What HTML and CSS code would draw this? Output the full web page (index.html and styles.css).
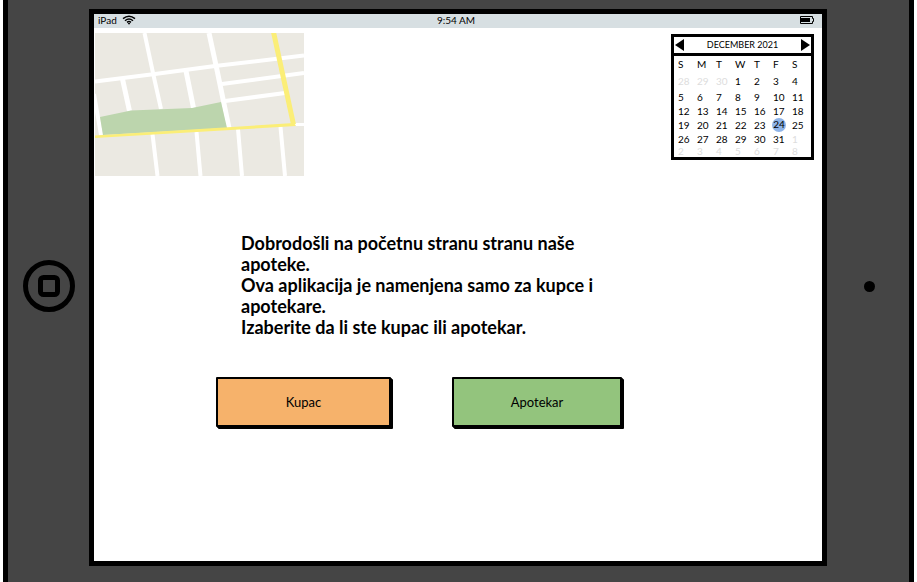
FILE: index.html
```html
<!DOCTYPE html>
<html lang="sr">
<head>
<meta charset="utf-8">
<title>Apoteka</title>
<link rel="stylesheet" href="styles.css">
</head>
<body>
<div class="tablet">
  <div class="bezel">
    <svg class="home" width="52" height="52" viewBox="0 0 52 52" aria-hidden="true">
      <circle cx="26" cy="26" r="23.500"/>
      <rect x="17.500" y="17.500" width="17" height="17" rx="3"/>
    </svg>
  </div>
  <div class="screen">
    <header class="status">
      <div class="carrier">
        <span>iPad</span>
        <svg width="14" height="10" viewBox="0 0 14 10" aria-hidden="true">
          <path class="wave" d="M1 3.700Q7-1.300 13 3.700M3 5.700Q7 2.300 11 5.700M5 7.400Q7 5.800 9 7.400"/>
          <path d="M5.700 8.300Q7 7.300 8.300 8.300L7 9.800z"/>
        </svg>
      </div>
      <span>9:54 AM</span>
      <svg class="battery" width="14" height="8" viewBox="0 0 14 8" aria-hidden="true">
        <path class="case" d="M.5.5H12.500V2.500H13.500V5.500H12.500V7.500H.5z"/>
        <rect x="1" y="2" width="9" height="4"/>
      </svg>
    </header>
    <div class="widgets">
      <svg class="map" width="209" height="143" viewBox="0 0 209 143" role="img" aria-label="Mapa">
        <rect width="209" height="143" fill="#ebe9e2"/>
        <g fill="none" stroke="#fff" stroke-width="4">
          <path d="M0 48.500L60 41L120 33L209 22.500"/>
          <path d="M49.500 0L58 40L66 76"/>
          <path stroke-width="5" d="M114 0L122 37L134 95"/>
          <path stroke-width="5" d="M27.500 46L34.500 78M91 38L98.500 75"/>
          <path d="M127 51L209 40M130 68L190 60"/>
          <path d="M-1 61L6 102"/>
          <path d="M57.500 101L62.500 143M101.500 99L105.500 143M143 96L147 143M185.500 94L190 143"/>
          <path stroke-width="3" d="M198 91.500H209"/>
        </g>
        <path fill="#bcd5ad" d="M5 84L36 77.500L97 75L126 69L132 95L8 102z"/>
        <path fill="none" stroke="#fbee77" stroke-width="5" d="M178.500-1L198.500 91.500"/>
        <path fill="#fbee77" d="M0 102.500L199 90L201 93L0 105z"/>
      </svg>
      <section class="calendar">
        <div class="month">
          <button type="button" aria-label="Prethodni mesec"><svg width="9" height="12" viewBox="0 0 9 12"><path d="M9 0V12L0 6z"/></svg></button>
          <span>DECEMBER 2021</span>
          <button type="button" aria-label="Naredni mesec"><svg width="9" height="12" viewBox="0 0 9 12"><path d="M0 0V12L9 6z"/></svg></button>
        </div>
        <table>
          <thead><tr><th>S</th><th>M</th><th>T</th><th>W</th><th>T</th><th>F</th><th>S</th></tr></thead>
          <tbody>
            <tr><td class="other">28</td><td class="other">29</td><td class="other">30</td><td>1</td><td>2</td><td>3</td><td>4</td></tr>
            <tr><td>5</td><td>6</td><td>7</td><td>8</td><td>9</td><td>10</td><td>11</td></tr>
            <tr><td>12</td><td>13</td><td>14</td><td>15</td><td>16</td><td>17</td><td>18</td></tr>
            <tr><td>19</td><td>20</td><td>21</td><td>22</td><td>23</td><td><span class="today">24</span></td><td>25</td></tr>
            <tr><td>26</td><td>27</td><td>28</td><td>29</td><td>30</td><td>31</td><td class="other">1</td></tr>
            <tr class="last"><td class="other">2</td><td class="other">3</td><td class="other">4</td><td class="other">5</td><td class="other">6</td><td class="other">7</td><td class="other">8</td></tr>
          </tbody>
        </table>
      </section>
    </div>
    <main>
      <p class="welcome">Dobrodošli na početnu stranu stranu naše apoteke.<br>Ova aplikacija je namenjena samo za kupce i apotekare.<br>Izaberite da li ste kupac ili apotekar.</p>
      <div class="choices">
        <button type="button" class="choice buyer">Kupac</button>
        <button type="button" class="choice pharmacist">Apotekar</button>
      </div>
    </main>
  </div>
  <div class="bezel"><span class="camera"></span></div>
</div>
</body>
</html>
```
FILE: styles.css
```css
* { box-sizing: border-box; }
body {
  margin: 0;
  background: #fff;
  color: #000;
  font-family: Lato, "Liberation Sans", sans-serif;
}
button { font: inherit; color: inherit; cursor: pointer; }
svg { display: block; }
.tablet {
  display: grid;
  grid-template-columns: 81px 1fr 82px;
  min-height: 100vh;
  margin: 0 3px;
  padding: 9px 0 16px;
  border: solid #000;
  border-width: 0 5px;
  background: #454545;
}
.bezel {
  display: flex;
  align-items: center;
  justify-content: center;
  padding-bottom: 3px;
}
.home { fill: none; stroke: #000; stroke-width: 5; }
.camera {
  width: 11px;
  height: 11px;
  margin-left: 3px;
  border-radius: 50%;
  background: #000;
}
.screen { border: 5px solid #000; background: #fff; }
.status {
  display: grid;
  grid-template-columns: 1fr auto 1fr;
  align-items: center;
  height: 14px;
  padding: 0 8px 2px 4px;
  background: #d7dfe2;
  font-size: 10px;
  line-height: 12px;
}
.carrier { display: flex; align-items: center; gap: 5px; }
.wave { fill: none; stroke: #000; stroke-width: 1.5; }
.battery { justify-self: end; }
.case { fill: none; stroke: #000; }
.widgets {
  display: flex;
  align-items: flex-start;
  justify-content: space-between;
  padding: 5px 8px 0 1px;
}
.calendar {
  width: 143px;
  margin-top: 1px;
  border: 3px solid #000;
  font-size: 10px;
}
.month {
  display: flex;
  align-items: center;
  justify-content: space-between;
  height: 19px;
  padding: 0 1px 1px;
  border-bottom: 3px solid #000;
  font-size: 9px;
}
.month button { padding: 0; border: 0; background: none; }
table {
  width: 100%;
  padding: 0 0 0 4px;
  border-spacing: 0;
  table-layout: fixed;
}
th, td {
  height: 14px;
  padding: 0;
  font-weight: 400;
  line-height: 13px;
  text-align: left;
}
th { height: 16px; }
tbody tr:first-child td { height: 18px; }
.last td { height: 11px; line-height: 11px; }
.other { color: #ddd; }
.today {
  display: block;
  width: 14px;
  height: 14px;
  margin: 0 -1px;
  border-radius: 50%;
  background: #8fb4e8;
  text-align: center;
}
.welcome {
  width: 360px;
  margin: 57px 0 0 147px;
  font-size: 18px;
  font-weight: 700;
  line-height: 21px;
}
.choices {
  display: flex;
  gap: 61px;
  margin: 39px 0 0 122px;
}
.choice {
  width: 175px;
  height: 50px;
  padding: 0;
  border: 2px solid #000;
  border-radius: 1px;
  box-shadow: 1px 1px #000, 2px 2px #000;
  font-size: 13px;
}
.buyer { background: #f6b26b; }
.pharmacist { width: 170px; background: #93c47d; }
```
